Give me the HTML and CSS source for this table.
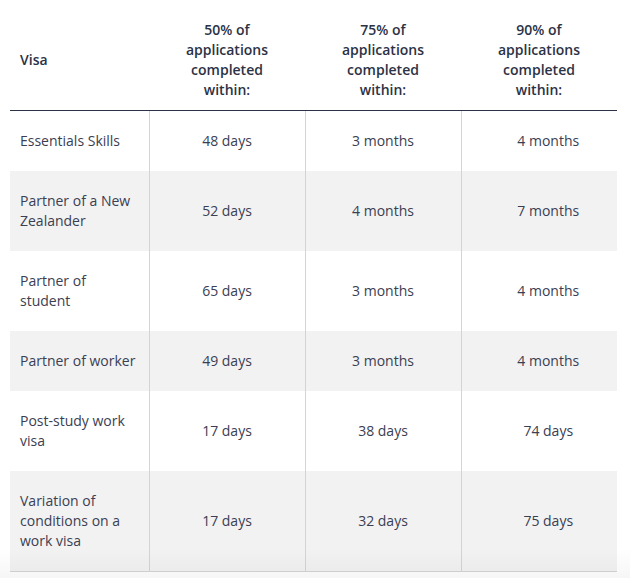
FILE: index.html
```html
<!DOCTYPE html>
<html lang="en">
<head>
<meta charset="utf-8">
<title>Visa processing times</title>
<link rel="stylesheet" href="styles.css">
</head>
<body>
<div class="wrap">
  <table class="visa-table">
    <colgroup>
      <col class="c-visa">
      <col class="c-num">
      <col class="c-num">
      <col class="c-num">
    </colgroup>
    <thead>
      <tr>
        <th class="h-visa">Visa</th>
        <th>50% of<br>applications<br>completed<br>within:</th>
        <th>75% of<br>applications<br>completed<br>within:</th>
        <th>90% of<br>applications<br>completed<br>within:</th>
      </tr>
    </thead>
    <tbody>
      <tr>
        <td class="name">Essentials Skills</td>
        <td>48 days</td>
        <td>3 months</td>
        <td class="last">4 months</td>
      </tr>
      <tr>
        <td class="name">Partner of a New Zealander</td>
        <td>52 days</td>
        <td>4 months</td>
        <td class="last">7 months</td>
      </tr>
      <tr>
        <td class="name">Partner of<br>student</td>
        <td>65 days</td>
        <td>3 months</td>
        <td class="last">4 months</td>
      </tr>
      <tr>
        <td class="name">Partner of worker</td>
        <td>49 days</td>
        <td>3 months</td>
        <td class="last">4 months</td>
      </tr>
      <tr>
        <td class="name">Post-study work<br>visa</td>
        <td>17 days</td>
        <td>38 days</td>
        <td class="last">74 days</td>
      </tr>
      <tr>
        <td class="name">Variation of<br>conditions on a<br>work visa</td>
        <td>17 days</td>
        <td>32 days</td>
        <td class="last">75 days</td>
      </tr>
    </tbody>
  </table>
  <div class="fade"></div>
</div>
</body>
</html>
```

FILE: styles.css
```css
html, body {
  margin: 0;
  padding: 0;
  background: #ffffff;
}

body {
  font-family: "Open Sans", "Noto Sans", sans-serif;
  color: #3a4052;
}

.wrap {
  position: relative;
  width: 630px;
  height: 578px;
  padding: 0 13px 0 10px;
  box-sizing: border-box;
  overflow: hidden;
}

.visa-table {
  width: 607px;
  border-collapse: collapse;
  table-layout: fixed;
  font-size: 14px;
  line-height: 20px;
}

.c-visa { width: 139px; }
.c-num { width: 156px; }

.visa-table th {
  height: 80px;
  padding: 20px 10px 10px;
  font-weight: 600;
  color: #2b3245;
  text-align: center;
  vertical-align: middle;
  border-bottom: 1px solid #2b3245;
}

.visa-table th.h-visa {
  text-align: left;
}

.visa-table td {
  padding: 20px 10px;
  text-align: center;
  vertical-align: middle;
  border-left: 1px solid #d4d4d6;
}

.visa-table td.name {
  text-align: left;
  border-left: none;
}

.visa-table td.last {
  padding-left: 28px;
}

.visa-table tbody tr:nth-child(even) td {
  background: #f2f2f2;
}

.visa-table tbody tr:last-child td {
  border-bottom: 1px solid #d4d4d6;
}

.fade {
  position: absolute;
  left: 0;
  right: 0;
  bottom: 0;
  height: 30px;
  background: linear-gradient(to bottom, rgba(0, 0, 0, 0), rgba(0, 0, 0, 0.035));
  pointer-events: none;
}
```
